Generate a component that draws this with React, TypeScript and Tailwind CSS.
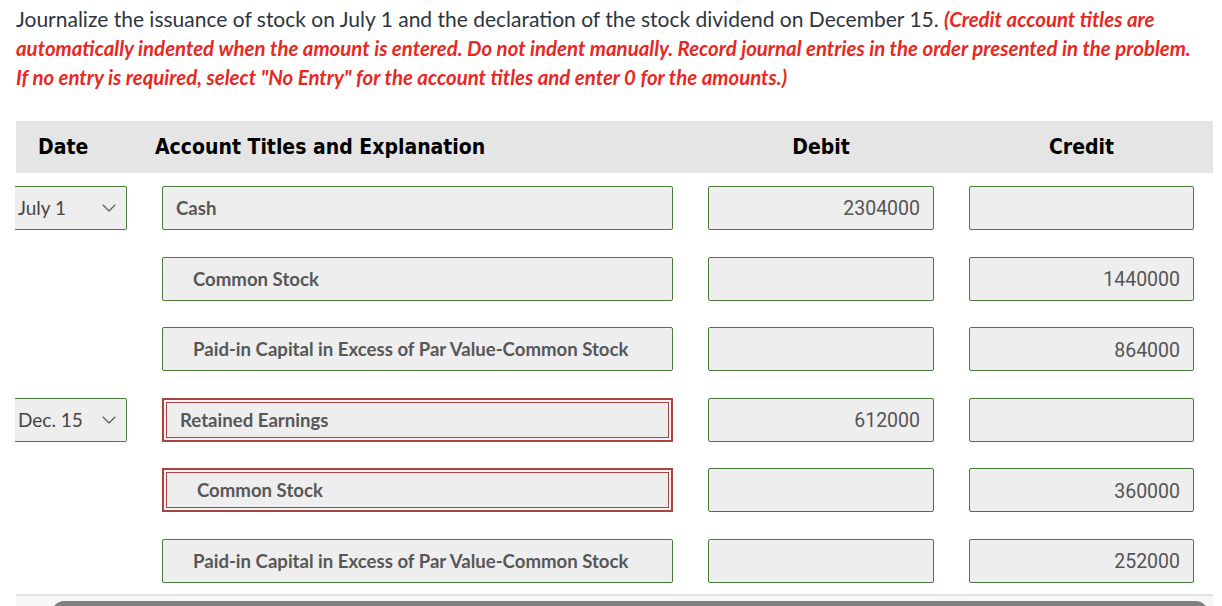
import { ChevronDown } from 'lucide-react'

type Row = {
  date?: string
  account: string
  credit?: boolean
  invalid?: boolean
  debit?: string
  creditAmt?: string
}

const rows: Row[] = [
  { date: 'July 1', account: 'Cash', debit: '2304000' },
  { account: 'Common Stock', credit: true, creditAmt: '1440000' },
  { account: 'Paid-in Capital in Excess of Par Value-Common Stock', credit: true, creditAmt: '864000' },
  { date: 'Dec. 15', account: 'Retained Earnings', invalid: true, debit: '612000' },
  { account: 'Common Stock', credit: true, invalid: true, creditAmt: '360000' },
  { account: 'Paid-in Capital in Excess of Par Value-Common Stock', credit: true, creditAmt: '252000' },
]

function AccountBox({ row }: { row: Row }) {
  const text = (
    <span className={`pt-[2px] font-bold text-[18.6px] text-[#575757] ${row.credit ? 'pl-[30px]' : 'pl-[13px]'}`}>{row.account}</span>
  )
  if (row.invalid) {
    return (
      <div className="h-[44px] border-2 border-[#a94442] bg-[#f4f4f4] p-[2px]">
        <div className="flex h-full items-center border border-[#a94442] bg-[#eeeeee]">{text}</div>
      </div>
    )
  }
  return <div className="flex h-[44px] items-center rounded-[2px] border border-[#4a7b3c] bg-[#eeeeee]">{text}</div>
}

function AmountBox({ value }: { value?: string }) {
  return (
    <div className="flex h-[44px] items-center justify-end rounded-[2px] border border-[#4a7b3c] bg-[#eeeeee] pr-[13px] pt-[2px] font-['Roboto',sans-serif] text-[19.5px] text-[#555]">
      {value}
    </div>
  )
}

export default function App() {
  return (
    <div className="h-[606px] w-[1222px] overflow-hidden bg-white font-['Lato',sans-serif]">
      <p className="pl-4 pr-4 pt-[4px] text-[21px] leading-[29px] text-[#2d3540]">
        Journalize the issuance of stock on July 1 and the declaration of the stock dividend on December 15.{' '}
        <em className="text-[20.4px] leading-none font-bold text-[#e8281f]">
          (Credit account titles are automatically indented when the amount is entered. Do not indent manually. Record journal entries in the order presented in the problem. If no entry is required, select "No Entry" for the account titles and enter 0 for the amounts.)
        </em>
      </p>

      <div className="ml-4 mt-[30px] w-[1197px]">
        <div className="grid h-[52px] grid-cols-[111px_511px_226px_225px] items-center gap-x-[35px] bg-[#e5e5e5] pt-[1px] font-['DejaVu_Sans_Condensed','DejaVu_Sans',sans-serif] text-[21px] font-bold text-black">
          <div className="pl-[22px]">Date</div>
          <div className="-ml-[7px]">Account Titles and Explanation</div>
          <div className="text-center">Debit</div>
          <div className="text-center">Credit</div>
        </div>

        <div className="mt-[13px] grid grid-cols-[111px_511px_226px_225px] gap-x-[35px] gap-y-[26.6px]">
          {rows.map((row, i) => (
            <div key={i} className="contents">
              {row.date ? (
                <div className="-ml-px flex h-[44px] items-center justify-between rounded-r-[2px] border border-l-0 border-[#4a7b3c] bg-[#eeeeee] pl-[3px] pr-[5px] text-[19px] text-[#444]">
                  <span>{row.date}</span>
                  <ChevronDown size={24} strokeWidth={1.1} className="text-[#555]" />
                </div>
              ) : (
                <div />
              )}
              <AccountBox row={row} />
              <AmountBox value={row.debit} />
              <AmountBox value={row.creditAmt} />
            </div>
          ))}
        </div>

        <div className="mt-[11px] h-[2px] bg-[#e0e0e0]" />
        <div className="h-[20px] bg-[#f7f7f7] pl-[36px] pr-[5px] pt-[5px]">
          <div className="h-full rounded-t-[12px] bg-[#7f7f7f]" />
        </div>
      </div>
    </div>
  )
}
